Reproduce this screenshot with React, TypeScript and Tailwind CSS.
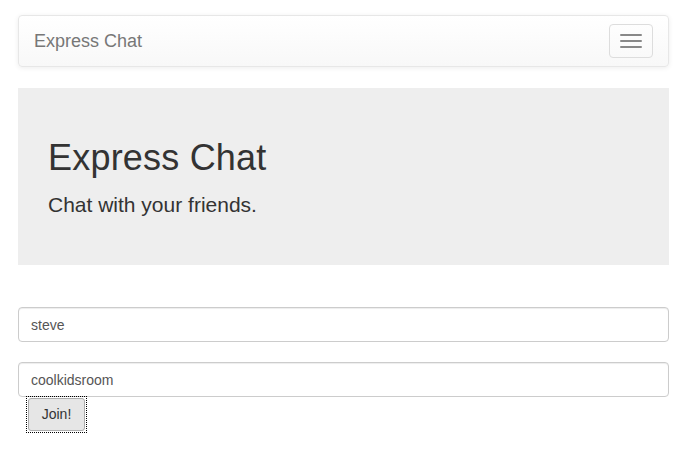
import React from 'react';

const font = { fontFamily: '"Liberation Sans", Arial, sans-serif' };

export default function App() {
  return (
    <div className="bg-white min-h-[456px] pl-[18px] pr-[21px] pt-[15px] text-[14px] text-[#333]" style={font}>
      {/* navbar */}
      <nav className="h-[52px] flex items-start justify-between rounded-[4px] border border-[#e7e7e7] bg-gradient-to-b from-white to-[#f8f8f8] shadow-[inset_0_1px_0_rgba(255,255,255,0.15),0_1px_5px_rgba(0,0,0,0.075)]">
        <a className="px-[15px] py-[15px] text-[18px] leading-[20px] text-[#777]">Express Chat</a>
        <button className="mt-[8px] mr-[15px] w-[44px] h-[34px] rounded-[4px] border border-[#ddd] flex flex-col items-center justify-center gap-[4px]">
          <span className="block w-[22px] h-[2px] rounded-[1px] bg-[#888]" />
          <span className="block w-[22px] h-[2px] rounded-[1px] bg-[#888]" />
          <span className="block w-[22px] h-[2px] rounded-[1px] bg-[#888]" />
        </button>
      </nav>

      {/* jumbotron */}
      <div className="mt-[21px] h-[177px] bg-[#eee] px-[30px] pt-[50px]">
        <h1 className="text-[36px] leading-[40px] text-[#333] tracking-[0.2px]">Express Chat</h1>
        <p className="mt-[12px] text-[21px] leading-[30px] font-light text-[#333]">Chat with your friends.</p>
      </div>

      {/* form */}
      <form className="mt-[42px] flex flex-col">
        <input
          defaultValue="steve"
          className="h-[35px] w-full rounded-[4px] border border-[#ccc] px-[12px] text-[14px] text-[#555] shadow-[inset_0_1px_1px_rgba(0,0,0,0.075)] outline-none"
          style={font}
        />
        <input
          defaultValue="coolkidsroom"
          className="mt-[20px] h-[35px] w-full rounded-[4px] border border-[#ccc] px-[12px] text-[14px] text-[#555] shadow-[inset_0_1px_1px_rgba(0,0,0,0.075)] outline-none"
          style={font}
        />
        <div className="ml-[9px] self-start outline outline-1 outline-dotted outline-black">
          <button
            type="button"
            className="m-[1px] h-[33px] w-[57px] rounded-[3px] border border-[#adadad] bg-[#e6e6e6] text-[14px] text-[#333]"
            style={font}
          >
            Join!
          </button>
        </div>
      </form>
    </div>
  );
}
